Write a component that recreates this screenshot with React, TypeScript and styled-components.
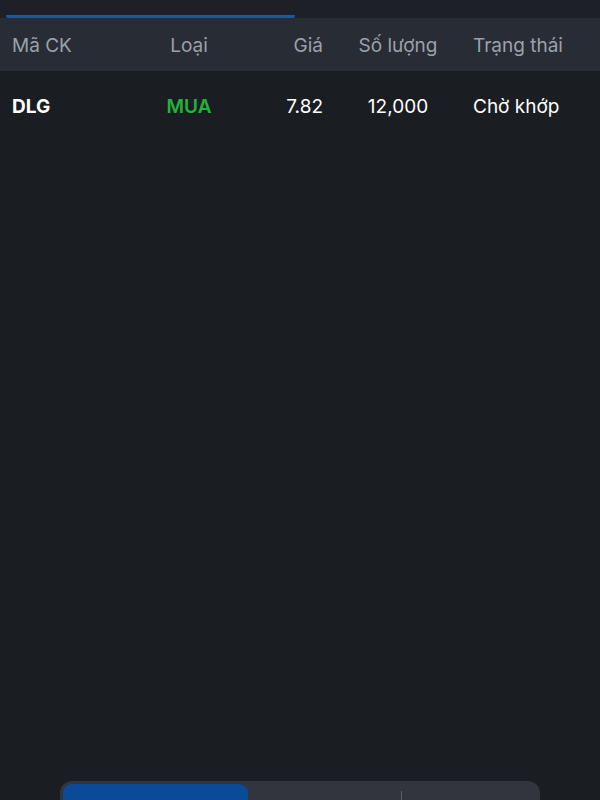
import React from 'react';
import styled, { createGlobalStyle } from 'styled-components';

const GlobalStyle = createGlobalStyle`
  html, body {
    margin: 0;
    padding: 0;
    background: #1a1d22;
  }
  * {
    box-sizing: border-box;
  }
`;

const Screen = styled.div`
  height: 800px;
  display: flex;
  flex-direction: column;
  overflow: hidden;
  background: #1a1d22;
  font-family: Inter, 'Noto Sans', sans-serif;
  color: #ffffff;
`;

const TabBar = styled.div`
  display: grid;
  grid-template-columns: 289px 1fr;
  padding: 0 6px;
  margin-top: -31px;
  background: #1d2127;
  flex-shrink: 0;
`;

const Tab = styled.div<{ $active?: boolean }>`
  height: 49px;
  padding-top: 9px;
  text-align: center;
  font-size: 17px;
  line-height: 20px;
  color: ${p => (p.$active ? '#ffffff' : '#8d939c')};
  border-bottom: 3px solid ${p => (p.$active ? '#1e56a3' : 'transparent')};
  border-radius: 2px;
`;

const columns = `
  display: grid;
  grid-template-columns: 128px 98px 85px 150px 1fr;
  align-items: center;
  padding-left: 12px;
  font-size: 19px;
`;

const HeaderRow = styled.div`
  ${columns};
  height: 53px;
  padding-top: 1px;
  background: #282d35;
  color: #9ba1aa;
  flex-shrink: 0;
`;

const DataRow = styled.div`
  ${columns};
  height: 70px;
  flex-shrink: 0;
`;

const Cell = styled.div<{ $align?: 'left' | 'center' | 'right'; $weight?: number; $color?: string }>`
  text-align: ${p => p.$align || 'left'};
  font-weight: ${p => p.$weight || 400};
  color: ${p => p.$color || 'inherit'};
  white-space: nowrap;
`;

const Spacer = styled.div`
  flex: 1;
`;

const Footer = styled.div`
  height: 19px;
  flex-shrink: 0;
  padding: 0 60px;
`;

const Segmented = styled.div`
  display: grid;
  grid-template-columns: 185px 153px 1fr;
  height: 56px;
  padding: 3px;
  background: #32353d;
  border-radius: 12px;
`;

const Segment = styled.div<{ $active?: boolean; $divider?: boolean }>`
  position: relative;
  display: flex;
  justify-content: center;
  align-items: center;
  padding-top: 4px;
  font-size: 17px;
  font-weight: 500;
  color: #ffffff;
  background: ${p => (p.$active ? '#0b4a99' : 'transparent')};
  border-radius: 9px;

  &::before {
    content: '';
    display: ${p => (p.$divider ? 'block' : 'none')};
    position: absolute;
    left: 0;
    top: 7px;
    bottom: 7px;
    width: 1px;
    background: #5b5f67;
  }
`;

const orders = [
  { code: 'DLG', side: 'MUA', price: '7.82', qty: '12,000', status: 'Chờ khớp' },
];

export default function App() {
  return (
    <Screen>
      <GlobalStyle />
      <TabBar>
        <Tab $active>Lệnh trong ngày</Tab>
        <Tab>Lịch sử lệnh</Tab>
      </TabBar>
      <HeaderRow>
        <Cell>Mã CK</Cell>
        <Cell $align='center'>Loại</Cell>
        <Cell $align='right'>Giá</Cell>
        <Cell $align='center'>Số lượng</Cell>
        <Cell>Trạng thái</Cell>
      </HeaderRow>
      {orders.map(o => (
        <DataRow key={o.code}>
          <Cell $weight={700}>{o.code}</Cell>
          <Cell $align='center' $weight={600} $color='#20b43c'>
            {o.side}
          </Cell>
          <Cell $align='right'>{o.price}</Cell>
          <Cell $align='center'>{o.qty}</Cell>
          <Cell>{o.status}</Cell>
        </DataRow>
      ))}
      <Spacer />
      <Footer>
        <Segmented>
          <Segment $active>Đặt lệnh</Segment>
          <Segment>Danh mục</Segment>
          <Segment $divider>Tài khoản</Segment>
        </Segmented>
      </Footer>
    </Screen>
  );
}
